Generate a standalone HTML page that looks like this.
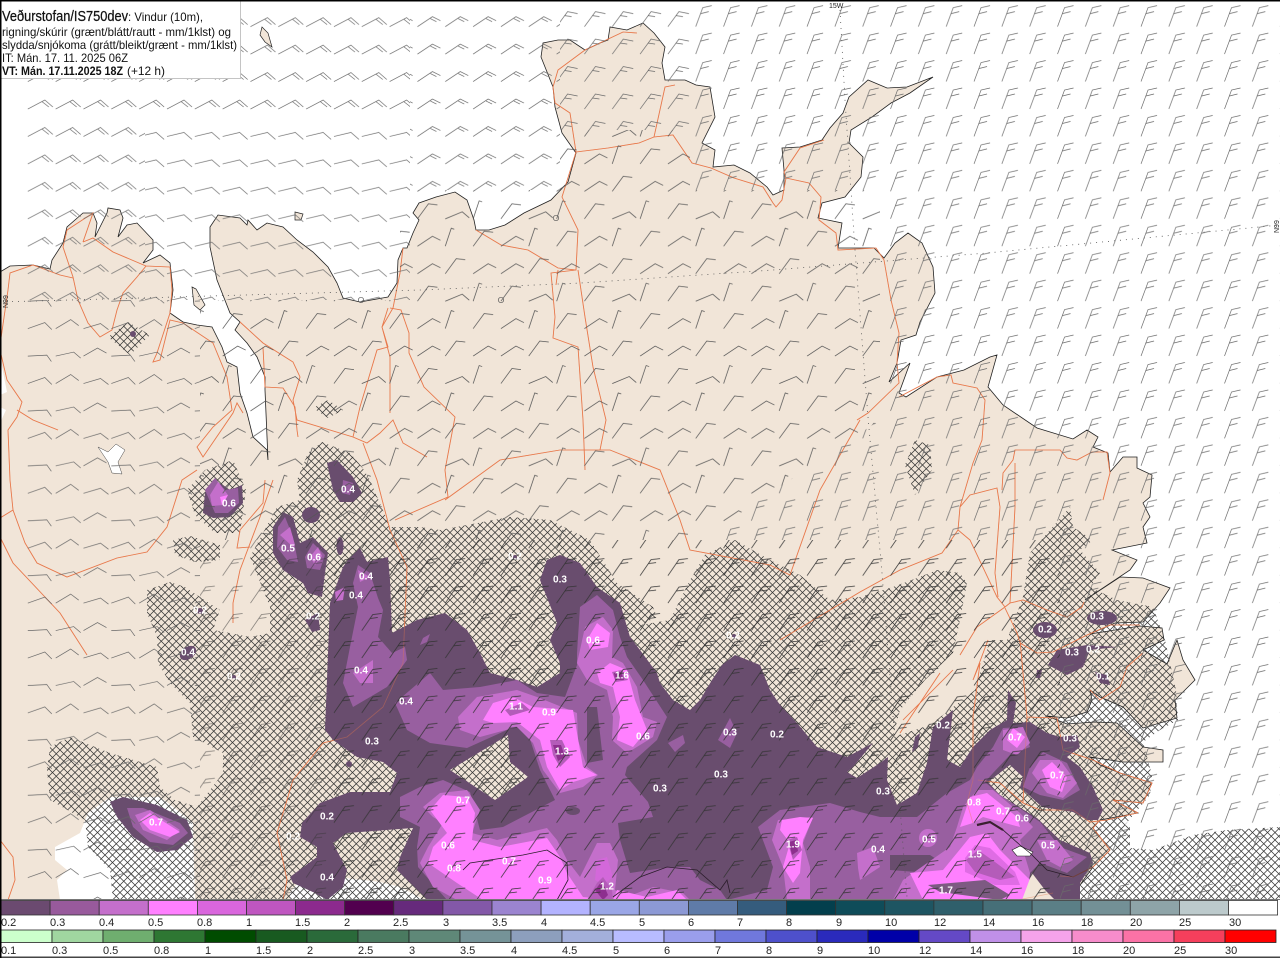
<!DOCTYPE html>
<html><head><meta charset="utf-8"><title>Veðurstofan</title>
<style>html,body{margin:0;padding:0;background:#fff}svg{display:block}</style></head>
<body>
<svg xmlns="http://www.w3.org/2000/svg" width="1280" height="958" viewBox="0 0 1280 958" font-family="'Liberation Sans',sans-serif">
<defs>
<pattern id="h" width="7.5" height="7.5" patternUnits="userSpaceOnUse"><path d="M0 0L7.5 7.5M7.5 0L0 7.5" stroke="#333" stroke-width=".75" fill="none"/></pattern>
<pattern id="pA" x="-1" y="87" width="27.83" height="27.45" patternUnits="userSpaceOnUse"><path d="M1 22L18 13L26 20M15 14.5L22 20" stroke="#6a6a6a" stroke-width=".7" fill="none"/></pattern>
<pattern id="pB" x="-1" y="87" width="27.83" height="27.45" patternUnits="userSpaceOnUse"><path d="M1 22L18 18L26 25" stroke="#6a6a6a" stroke-width=".7" fill="none"/></pattern>
<pattern id="pC0" x="-1" y="87" width="27.83" height="27.45" patternUnits="userSpaceOnUse"><path d="M1 22L16 12L24 16M14 14L20 17" stroke="#6a6a6a" stroke-width=".7" fill="none"/></pattern>
<pattern id="pC" x="-1" y="87" width="27.83" height="27.45" patternUnits="userSpaceOnUse"><path d="M1 22L12 7L22 9M9 11L16 12" stroke="#6a6a6a" stroke-width=".7" fill="none"/></pattern>
<pattern id="pD" x="-1" y="87" width="27.83" height="27.45" patternUnits="userSpaceOnUse"><path d="M1 22L8 3L17 1M6 9L14 7" stroke="#6a6a6a" stroke-width=".7" fill="none"/></pattern>
<pattern id="pE" x="-1" y="87" width="27.83" height="27.45" patternUnits="userSpaceOnUse"><path d="M1 22L12 6L21 5M9 10L17 9" stroke="#333" stroke-width=".75" fill="none"/></pattern>
<pattern id="pM" x="-1" y="87" width="83.49" height="82.35" patternUnits="userSpaceOnUse"><path d="M1 22l15 -10l8 4M28.8 22l11 -15l9 1M56.7 22l15 -10l8 4M1 49.5l11 -15l9 1M28.8 49.5l17 -7l7 6M56.7 49.5l6 -18l3 1M1 76.9l15 -10l8 4M28.8 76.9l6 -18l3 1M56.7 76.9l11 -15l9 1" stroke="#555" stroke-width=".75" fill="none"/></pattern>
<pattern id="pW" x="-1" y="87" width="83.49" height="54.9" patternUnits="userSpaceOnUse"><path d="M1 22l17 -5l8 6M28.8 22l17 -6l7 7M56.7 22l15 -9l8 6M1 49.5l14 -8l9 5M28.8 49.5l19 -1l5 7M56.7 49.5l18 -4l7 6" stroke="#666" stroke-width=".7" fill="none"/></pattern>
<g id="roads" fill="none" stroke="#e8794c" stroke-width=".85">
<path d="M0 345L8 290L10 273L33 265L60 275L73 278"/>
<path d="M83 242L93 213L67 230L63 247L73 277L78 300L88 323L100 337L112 330L117 310L123 293L137 277L146 266L113 252L93 238L83 242M146 266L170 267L172 290L170 313L157 353L153 362L160 360L170 320L183 323L213 343L227 377L232 410L213 427L197 447L203 457L233 413L237 403L243 413"/>
<path d="M0 350L7 380L22 402L17 417L8 430L10 480L13 510L0 518M13 510L25 543L37 563L67 577L117 558L147 552L167 527L182 480L197 470M17 410L33 420L58 430M0 537L13 563L60 613L87 655M0 840L13 857L15 880L8 900"/>
<path d="M240 322L263 343L293 362L300 377L293 400L297 420L353 437L360 407L377 350L388 347L382 327L393 308L400 273L403 248M263 347L265 387L283 388L295 407L297 430L298 437M353 437L367 443L380 433L393 420L403 443L427 457M363 443L377 480L390 530L407 567L403 663L383 707L347 737L323 743L293 780L277 833L287 880L283 900M388 308L382 327L390 357L390 413"/>
<path d="M233 623L233 603L240 570L260 517L273 480M265 480L263 503L240 530L237 548L250 547"/>
<path d="M476 230L501 245L528 250L558 268L576 270L578 230L562 197L576 152L570 113L555 103L553 87L558 70L585 50L623 32L637 33M576 152L608 148L639 143L654 137L665 87L675 85M654 137L673 135L692 163L711 168L734 178L763 187L773 203L776 207L782 200L786 178L784 172L800 148L824 140M786 178L809 183L821 197L819 220L836 233L838 250L876 248L884 260L891 300L899 333L897 363L899 383L868 413L857 420"/>
<path d="M576 270L551 273L555 317L553 338L578 347L583 420L585 470M578 270L585 317L593 367L606 420L600 450M558 270L556 285M390 308L401 310L409 333L409 353L424 387L455 417L445 470L448 497L395 520M445 500L500 460L560 450L610 450L660 470L680 520L690 550L770 565L790 575L820 490L860 420"/>
<path d="M899 397L937 377L951 375L953 383L977 388L985 400L982 440L973 463L960 507L958 530L970 540L997 597L1005 607M958 530L942 553L900 570L860 592L780 640M960 507L970 495L997 488L1000 507L995 573L998 597M1002 490L1003 473L1013 460L1015 450L1060 450L1067 458L1077 460L1092 452L1107 452L1110 473L1103 500M1015 463L1015 507L1010 603L1005 607L977 627L960 655M1010 603L1023 600L1047 610L1067 617L1082 607L1084 602M1005 608L1017 633L1020 643L1037 653L1053 652L1087 635L1110 625L1140 625"/>
<path d="M1020 640L1027 717L1057 718L1063 750L1093 760L1120 773L1152 783L1143 803L1113 800L1138 813M1027 717L1023 803L1040 810L1073 810L1090 822L1107 820L1137 813M1143 653L1127 667L1120 687L1100 700L1090 690M988 640L973 680L980 663L973 717L973 780L967 803L973 823M978 780L1000 783L1023 803M940 673L920 703L900 733M953 670L903 720M1100 820L1093 828L1110 850L1093 867L1073 877L1060 876M1053 893L1033 897L1017 900"/>
</g>
</defs>
<rect width="1280" height="958" fill="#fff"/>
<path fill="#f1e5d8" stroke="#222" stroke-width=".8" d="M0 272L10 266L33 265L50 269L52 260L63 243L67 227L83 213L93 213L97 223L95 237L107 213L108 208L120 210L123 218L118 237L127 225L137 223L153 240L153 250L143 263L160 255L170 263L173 290L170 313L183 322L197 325L212 327L222 347L227 362L237 367L240 393L247 413L253 437L267 450L268 460L265 390L265 377L257 357L247 343L235 330L240 322L230 313L217 280L210 247L210 227L218 215L240 218L247 225L248 220L257 230L267 223L283 227L297 240L313 252L328 267L337 283L343 298L360 302L388 297L397 283L398 260L403 248L407 248L413 233L419 220L413 213L419 203L436 197L455 192L467 200L474 220L476 230L489 230L505 225L524 213L551 200L568 182L576 153L562 133L555 107L553 87L541 57L543 43L558 40L570 40L585 50L600 43L608 40L610 27L627 30L643 23L654 33L665 47L662 63L665 80L685 80L696 85L710 87L715 117L702 143L715 150L713 167L734 165L750 173L767 187L773 195L784 190L784 170L782 148L800 147L822 140L830 128L843 113L849 97L868 80L887 88L907 87L933 77L910 93L891 103L872 117L851 130L849 143L863 157L861 177L845 197L822 203L818 218L842 223L838 248L874 248L884 258L895 243L908 233L922 243L933 267L935 293L920 322L916 335L901 340L897 363L889 382L910 363L899 393L906 397L937 377L964 370L990 357L997 355L988 387L1003 405L1037 428L1073 439L1087 430L1098 437L1093 447L1108 453L1110 472L1123 457L1137 457L1137 468L1152 475L1150 497L1143 503L1150 517L1143 527L1147 543L1112 550L1137 560L1130 570L1085 600L1120 577L1143 578L1170 588L1160 603L1143 622L1115 623L1090 634L1140 626L1162 628L1164 640L1143 650L1167 664L1177 640L1183 660L1195 680L1175 700L1177 718L1143 728L1123 707L1100 697L1090 690L1092 700L1087 712L1067 718L1047 716L1067 724L1095 722L1117 723L1143 747L1163 750L1163 762L1123 762L1090 757L1100 765L1120 773L1152 783L1143 803L1113 800L1138 813L1100 820L1093 828L1110 850L1093 867L1080 885L1060 900L0 900Z"/>
<path fill="#f1e5d8" stroke="#222" stroke-width=".7" d="M262 27L268 33L272 47L265 42L260 35ZM192 287L196 289L205 305L200 310L194 305ZM295 212L303 214L301 220L295 220Z"/>
<path fill="#fff" d="M0 357L3 372L7 392L0 395ZM0 407L6 410L0 423ZM55 847L80 833L88 813L110 797L160 797L177 810L193 823L195 900L60 900L57 880L67 870L55 860ZM290 893L300 880L345 878L380 882L400 887L425 900L290 900Z"/>
<path fill="#fff" stroke="#444" stroke-width=".5" d="M98 447L108 452L116 444L125 450L118 462L122 474L112 473L108 462Z"/>
<g fill="url(#h)">
<path d="M308 453L322 442L350 453L362 467L370 480L390 527L420 527L440 530L510 517L550 520L590 540L617 583L653 607L657 617L640 625L670 620L690 580L705 555L735 540L770 560L800 575L830 600L860 597L893 587L917 578L937 570L960 573L967 583L960 620L953 653L925 680L900 710L893 737L930 725L975 690L990 640L1007 640L1023 597L1030 553L1050 530L1070 507L1073 527L1093 540L1080 550L1100 573L1090 587L1117 600L1153 607L1165 640L1176 690L1178 720L1160 730L1143 742L1152 775L1150 795L1125 825L1130 827L1130 848L1153 850L1193 835L1227 830L1280 827L1280 900L113 900L110 870L88 847L85 820L50 800L47 770L50 747L70 737L110 753L157 767L160 787L175 800L197 807L223 773L223 753L193 737L190 703L170 683L158 663L157 637L147 613L147 590L170 582L185 587L200 597L220 610L213 630L230 633L250 637L270 633L270 607L250 557L277 507L300 500L297 480Z"/>
<path d="M173 540L190 536L220 545L220 560L195 562L175 555ZM187 490L205 470L233 460L246 490L240 533L215 533L195 515ZM108 337L128 322L150 335L130 355ZM313 408L328 400L343 410L328 418ZM905 465L915 440L930 445L932 470L915 495Z"/>
</g>
<use href="#roads"/>
<!-- precipitation 0.2 -->
<g fill="#694d6e">
<path d="M360 548L367 562L388 557L390 580L392 633L417 620L445 613L467 630L480 653L490 673L517 680L537 687L560 673L560 663L550 640L557 623L540 580L547 560L560 555L580 563L597 587L620 603L630 637L640 650L657 673L660 683L673 700L690 710L700 700L712 680L722 665L735 655L760 665L770 690L780 705L797 723L817 747L847 757L873 743L853 767L847 772L857 778L880 763L888 757L887 780L897 805L917 793L927 763L933 727L953 710L947 760L960 767L973 747L990 730L1007 720L1008 690L1016 703L1013 723L1030 722L1047 733L1060 737L1077 735L1080 747L1067 757L1080 767L1093 787L1103 810L1098 820L1087 820L1073 812L1042 807L1020 787L1023 777L1010 765L988 782L1000 795L1037 818L1060 840L1090 853L1093 863L1080 883L1080 900L428 900L397 870L400 857L413 828L347 833L333 843L347 870L343 887L327 900L315 893L293 883L290 877L317 857L317 847L300 837L302 823L320 803L350 792L390 792L397 773L383 762L357 757L333 740L325 730L330 603L343 567L348 560ZM450 770L495 800L528 777L510 762L508 735Z" fill-rule="evenodd"/>
<path d="M203 513L205 493L213 480L223 485L230 490L242 485L243 503L230 517L213 518ZM327 463L337 460L353 477L362 493L353 502L340 502L333 490ZM283 512L293 517L300 543L313 537L328 553L325 573L322 597L308 593L303 583L283 570L273 553L273 527ZM305 620L318 613L320 630L312 632ZM110 802L123 797L157 805L187 820L193 837L177 850L157 852L133 837L117 817ZM1048 665L1057 650L1087 645L1117 647L1090 650L1083 667L1067 675ZM1095 672L1107 675L1110 685L1100 683ZM1037 670L1042 670L1040 678L1036 678ZM915 737L920 733L918 747L912 752Z"/>
<ellipse cx="311" cy="515" rx="9" ry="8"/><ellipse cx="340" cy="546" rx="3.5" ry="9"/><ellipse cx="1102" cy="618" rx="15" ry="7"/><ellipse cx="1045" cy="630" rx="12" ry="8"/><ellipse cx="188" cy="653" rx="9" ry="6" transform="rotate(-35 188 653)"/><ellipse cx="349" cy="764" rx="3" ry="3"/><circle cx="200" cy="611" r="3"/><circle cx="133" cy="334" r="3"/><circle cx="515" cy="557" r="2"/><circle cx="734" cy="636" r="2"/><circle cx="234" cy="677" r="2"/>
</g>
<!-- 0.3 -->
<g fill="#985fa0">
<path d="M395 703L430 673L443 690L480 687L517 680L537 693L565 697L577 665L577 653L580 607L597 595L613 610L620 637L627 657L643 680L667 717L657 740L627 767L625 775L648 802L653 817L618 823L620 840L630 873L670 867L690 867L700 880L720 890L727 900L767 890L773 867L758 827L780 810L830 803L860 812L880 817L917 817L947 793L970 780L977 767L993 747L1003 728L1023 727L1030 747L1010 755L993 773L985 782L1000 795L1040 822L1060 847L1087 857L1067 873L1040 863L1030 873L1020 900L447 900L418 867L417 847L420 827L400 817L400 797L420 787L443 780L470 792L480 830L503 827L555 800L540 770L527 730L517 725L507 730L467 748L430 743L407 730Z"/>
<path d="M358 565L370 573L378 598L383 610L378 637L392 653L405 647L407 660L387 687L353 707L343 683L350 647L358 607L353 583ZM1023 787L1030 767L1043 752L1067 763L1080 790L1063 800L1040 795ZM668 743L683 735L685 743L675 752ZM718 740L730 718L737 733L730 748ZM423 638L430 634L427 642L420 645ZM205 490L215 478L225 490L238 488L239 503L228 513L215 513ZM343 480L353 483L350 495L342 493ZM285 517L293 537L298 562L287 560L277 547L278 527ZM305 557L313 543L325 555L320 570L307 568ZM127 808L143 808L180 823L188 833L173 845L150 842L133 827Z"/>
</g>
<g fill="#694d6e"><path d="M587 707L597 707L603 760L587 763ZM890 855L930 855L950 868L930 873L890 870Z"/><ellipse cx="573" cy="811" rx="7" ry="4"/></g>
<!-- 0.4 -->
<g fill="#c46fcb">
<path d="M458 717L477 697L517 690L537 697L577 713L578 740L587 767L598 775L583 787L560 793L543 770L533 743L517 727L480 737L460 730ZM580 650L585 627L603 617L613 630L612 657L623 663L637 687L643 717L657 722L653 737L627 753L612 740L613 717L607 690L587 680L577 663ZM423 807L440 793L467 790L480 810L472 833L497 840L547 828L557 840L567 860L580 877L597 843L610 843L618 860L615 890L627 897L653 887L683 893L690 900L457 900L433 887L420 863L428 847L443 823L433 817ZM772 840L778 820L813 817L803 843L810 867L810 900L787 900L783 867ZM957 827L963 807L977 790L993 790L1020 813L1033 827L1020 840L1030 873L1027 900L893 900L903 880L950 847ZM857 853L873 847L880 867L860 880L858 868ZM1037 840L1057 840L1073 860L1060 867L1047 860ZM1003 730L1023 727L1030 743L1017 755L1003 750ZM1040 760L1060 760L1077 783L1063 798L1047 793L1032 773ZM353 673L373 660L373 683L360 683ZM358 570L370 577L360 582ZM335 592L345 587L343 600L336 601ZM210 495L218 482L228 495L223 505L212 506ZM135 815L150 810L180 830L167 840L143 830ZM293 547L280 535L290 527L295 545ZM318 547L322 556L315 565L310 557Z"/>
<circle cx="928" cy="838" r="9"/>
</g>
<!-- 0.5 -->
<g fill="#ff80ff">
<path d="M483 720L493 703L513 697L533 707L573 710L577 733L583 767L597 775L573 782L560 790L547 767L540 740L517 722L493 723ZM587 640L597 623L610 633L608 647L590 650ZM597 673L610 663L627 670L635 700L647 730L633 747L617 740L620 717L613 687L600 683ZM430 810L443 795L467 797L475 813L472 840L500 847L547 838L560 857L567 873L583 897L613 900L617 890L647 897L677 890L687 900L483 900L457 883L428 863L433 847L447 833ZM782 820L800 817L813 818L803 840L800 873L793 883L783 867L790 843L780 830ZM960 827L970 797L987 793L1017 817L1020 827L983 817L973 823ZM957 853L970 837L987 833L1000 850L1030 880L1023 900L923 900L910 873L943 870ZM1007 740L1013 728L1025 737L1017 748ZM1042 770L1052 762L1067 777L1062 792L1050 787ZM140 820L150 813L180 832L170 837L150 830ZM220 497L228 495L222 505Z"/>
</g>
<!-- inner darker -->
<path fill="#d766dd" d="M965 858L975 845L990 848L1015 872L1020 885L995 885L965 872ZM597 860L607 857L613 877L603 885L595 880Z" opacity=".8"/>
<path fill="#b45cb9" d="M966 860L978 850L995 862L1015 877L1000 880L975 872ZM587 900L597 883L603 877L612 890L613 900ZM550 740L562 740L570 757L560 767L553 755ZM787 840L797 837L802 850L793 860ZM505 710L522 703L530 710L510 716ZM612 672L622 670L628 680L616 682Z"/>
<path fill="#8d2f8e" d="M789 842L796 840L798 851L792 855ZM614 673L621 672L624 680L615 680ZM553 745L561 745L565 757L558 761ZM595 890L602 881L608 895L603 900Z"/>
<path fill="#7d5a82" d="M928 885L985 880L1010 895L1000 900L940 892Z"/>
<path fill="#f1e5d8" d="M1032 873L1045 890L1055 900L1022 900Z"/>
<path fill="#fff" stroke="#222" stroke-width=".6" d="M1012 850L1020 846L1033 852L1030 856L1017 856Z"/>
<g fill="none" stroke="#2a1c2a" stroke-width=".8">
<path d="M977 825L990 822L1003 830L1020 845L1030 853L1047 870L1073 877L1093 867"/>
<path d="M463 870L470 863L523 855L547 850L567 863L568 880L557 900M613 897L640 877L667 867L697 870L720 890L727 880L730 893"/>
</g>
<path d="M977 825L990 822L1003 830" fill="none" stroke="#3a2030" stroke-width="2.2"/>
<use href="#roads" opacity=".4"/>
<g fill="none" stroke="#555" stroke-width=".8" stroke-dasharray="1 5">
<path d="M0 302L420 290L581 283L773 270L987 253L1280 225"/>
<path d="M840 10L845 100L855 250L868 417L882 573L900 807L907 897"/>
</g>
<g fill="none" stroke="#555" stroke-width=".7"><circle cx="361" cy="300" r="2.7"/><circle cx="501" cy="300" r="2.7"/><circle cx="556" cy="218" r="2.7"/></g>
<!-- wind barbs -->
<rect x="27" y="0" width="118" height="300" fill="url(#pA)"/>
<rect x="145" y="0" width="265" height="115" fill="url(#pA)"/>
<rect x="145" y="115" width="265" height="185" fill="url(#pB)"/>
<rect x="410" y="0" width="150" height="190" fill="url(#pC0)"/>
<rect x="560" y="0" width="130" height="130" fill="url(#pC)"/>
<polygon points="690,0 1280,0 1280,900 1060,900 1060,540 700,540 880,420 880,190 690,190" fill="url(#pD)"/>
<polygon points="400,190 560,190 560,130 690,130 690,190 880,190 880,420 700,540 400,540" fill="url(#pM)"/>
<polygon points="330,540 1060,540 1060,900 330,900" fill="url(#pE)"/>
<rect x="27" y="300" width="173" height="600" fill="url(#pW)"/>
<rect x="200" y="300" width="200" height="240" fill="url(#pM)"/>
<rect x="200" y="540" width="130" height="360" fill="url(#pE)" opacity=".6"/>
<!-- labels -->
<g fill="#fff" font-size="10" font-weight="bold" text-anchor="middle" dominant-baseline="central">
<text x="229" y="504">0.6</text><text x="348" y="490">0.4</text><text x="288" y="549">0.5</text><text x="314" y="558">0.6</text><text x="366" y="577">0.4</text><text x="356" y="596">0.4</text><text x="313" y="617">0.2</text><text x="188" y="653">0.4</text><text x="361" y="671">0.4</text><text x="406" y="702">0.4</text><text x="372" y="742">0.3</text><text x="560" y="580">0.3</text><text x="593" y="641">0.6</text><text x="622" y="676">1.6</text><text x="516" y="707">1.1</text><text x="549" y="713">0.9</text><text x="562" y="752">1.3</text><text x="643" y="737">0.6</text><text x="730" y="733">0.3</text><text x="777" y="735">0.2</text><text x="943" y="726">0.2</text><text x="721" y="775">0.3</text><text x="660" y="789">0.3</text><text x="883" y="792">0.3</text><text x="1015" y="738">0.7</text><text x="1070" y="739">0.3</text><text x="1057" y="776">0.7</text><text x="974" y="803">0.8</text><text x="1003" y="812">0.7</text><text x="1022" y="819">0.6</text><text x="1048" y="846">0.5</text><text x="929" y="840">0.5</text><text x="878" y="850">0.4</text><text x="975" y="855">1.5</text><text x="946" y="891">1.7</text><text x="793" y="845">1.9</text><text x="463" y="801">0.7</text><text x="448" y="846">0.6</text><text x="454" y="869">0.8</text><text x="509" y="862">0.7</text><text x="545" y="881">0.9</text><text x="607" y="887">1.2</text><text x="156" y="823">0.7</text><text x="327" y="817">0.2</text><text x="293" y="837">0.2</text><text x="327" y="878">0.4</text><text x="1045" y="630">0.2</text><text x="1097" y="617">0.3</text><text x="1072" y="653">0.3</text><text x="1093" y="650">0.2</text><text x="1103" y="677">0.1</text><text x="733" y="636">0.2</text><text x="515" y="557">0.2</text><text x="200" y="611">0.2</text><text x="234" y="677">0.2</text>
</g>
<g fill="#222" font-size="7"><text x="829" y="8">15W</text><text transform="translate(8 308) rotate(-90)">N99</text><text transform="translate(1279 233) rotate(-90)">N99</text></g>
<!-- header -->
<rect x="0.5" y="0.5" width="240" height="78" fill="#fff" stroke="#c4c4c4"/>
<g fill="#111" font-size="12">
<text x="2" y="21" font-size="14.5" textLength="126" lengthAdjust="spacingAndGlyphs" stroke="#111" stroke-width=".25">Veðurstofan/IS750dev</text><text x="128" y="21" textLength="75" lengthAdjust="spacingAndGlyphs">: Vindur (10m),</text>
<text x="2" y="36" textLength="229" lengthAdjust="spacingAndGlyphs">rigning/skúrir (grænt/blátt/rautt - mm/1klst) og</text>
<text x="2" y="49" textLength="235" lengthAdjust="spacingAndGlyphs">slydda/snjókoma (grátt/bleikt/grænt - mm/1klst)</text>
<text x="2" y="62" textLength="126" lengthAdjust="spacingAndGlyphs">IT: Mán. 17. 11. 2025 06Z</text>
<text x="2" y="75" font-weight="bold" textLength="121" lengthAdjust="spacingAndGlyphs">VT: Mán. 17.11.2025 18Z</text><text x="127" y="75" textLength="38" lengthAdjust="spacingAndGlyphs">(+12 h)</text>
</g>
<!-- frame -->
<path d="M.75 0V958M0 .75H1280" stroke="#000" stroke-width="1.5" fill="none"/>
<rect x="0" y="899" width="1280" height="59" fill="#fff"/>
<rect x="0" y="899" width="1280" height="1" fill="#777"/>
<!-- legend row 1 -->
<g stroke="#333" stroke-width=".8">
<rect x="1" y="900.5" width="49.1" height="14.5" fill="#6b4a70"/><rect x="50.1" y="900.5" width="49.1" height="14.5" fill="#985a9c"/><rect x="99.2" y="900.5" width="49.1" height="14.5" fill="#c46fcb"/><rect x="148.3" y="900.5" width="49.1" height="14.5" fill="#ff80ff"/><rect x="197.4" y="900.5" width="49.1" height="14.5" fill="#d966dd"/><rect x="246.5" y="900.5" width="49.1" height="14.5" fill="#bf56c0"/><rect x="295.6" y="900.5" width="49.1" height="14.5" fill="#8c2a8e"/><rect x="344.7" y="900.5" width="49.1" height="14.5" fill="#52004f"/><rect x="393.8" y="900.5" width="49.1" height="14.5" fill="#662a7c"/><rect x="442.9" y="900.5" width="49.1" height="14.5" fill="#8358a8"/><rect x="492" y="900.5" width="49.1" height="14.5" fill="#9b84d0"/><rect x="541.1" y="900.5" width="49.1" height="14.5" fill="#b3b3ff"/><rect x="590.2" y="900.5" width="49.1" height="14.5" fill="#9aa6e6"/><rect x="639.3" y="900.5" width="49.1" height="14.5" fill="#8c99d5"/><rect x="688.4" y="900.5" width="49.1" height="14.5" fill="#5f7ba8"/><rect x="737.5" y="900.5" width="49.1" height="14.5" fill="#355c7d"/><rect x="786.6" y="900.5" width="49.1" height="14.5" fill="#033f4d"/><rect x="835.7" y="900.5" width="49.1" height="14.5" fill="#0f4c59"/><rect x="884.8" y="900.5" width="49.1" height="14.5" fill="#1e5562"/><rect x="933.9" y="900.5" width="49.1" height="14.5" fill="#2f5f6b"/><rect x="983" y="900.5" width="49.1" height="14.5" fill="#466f78"/><rect x="1032.1" y="900.5" width="49.1" height="14.5" fill="#5b7f86"/><rect x="1081.2" y="900.5" width="49.1" height="14.5" fill="#739096"/><rect x="1130.3" y="900.5" width="49.1" height="14.5" fill="#8ea4a8"/><rect x="1179.4" y="900.5" width="49.1" height="14.5" fill="#bccacc"/><rect x="1228.5" y="900.5" width="49.1" height="14.5" fill="#fff"/>
</g>
<g stroke="#222" stroke-width=".8">
<rect x="1" y="930" width="51" height="12.5" fill="#ccffcc"/><rect x="52" y="930" width="51" height="12.5" fill="#a0d6a0"/><rect x="103" y="930" width="51" height="12.5" fill="#6fae6f"/><rect x="154" y="930" width="51" height="12.5" fill="#2e7733"/><rect x="205" y="930" width="51" height="12.5" fill="#004c00"/><rect x="256" y="930" width="51" height="12.5" fill="#185a20"/><rect x="307" y="930" width="51" height="12.5" fill="#2a6a3a"/><rect x="358" y="930" width="51" height="12.5" fill="#4a7a60"/><rect x="409" y="930" width="51" height="12.5" fill="#5f8878"/><rect x="460" y="930" width="51" height="12.5" fill="#759398"/><rect x="511" y="930" width="51" height="12.5" fill="#8d9fbd"/><rect x="562" y="930" width="51" height="12.5" fill="#a3afdb"/><rect x="613" y="930" width="51" height="12.5" fill="#b8bcff"/><rect x="664" y="930" width="51" height="12.5" fill="#9a9eec"/><rect x="715" y="930" width="51" height="12.5" fill="#7078dc"/><rect x="766" y="930" width="51" height="12.5" fill="#4e50cb"/><rect x="817" y="930" width="51" height="12.5" fill="#2a2abc"/><rect x="868" y="930" width="51" height="12.5" fill="#0000a8"/><rect x="919" y="930" width="51" height="12.5" fill="#6449c6"/><rect x="970" y="930" width="51" height="12.5" fill="#c090e8"/><rect x="1021" y="930" width="51" height="12.5" fill="#f5a3ea"/><rect x="1072" y="930" width="51" height="12.5" fill="#f78ccb"/><rect x="1123" y="930" width="51" height="12.5" fill="#fb72a6"/><rect x="1174" y="930" width="51" height="12.5" fill="#f63f5c"/><rect x="1225" y="930" width="51" height="12.5" fill="#ff0000"/>
</g>
<g fill="#222" font-size="11">
<text x="1" y="926">0.2</text><text x="50" y="926">0.3</text><text x="99" y="926">0.4</text><text x="148" y="926">0.5</text><text x="197" y="926">0.8</text><text x="246" y="926">1</text><text x="295" y="926">1.5</text><text x="344" y="926">2</text><text x="393" y="926">2.5</text><text x="443" y="926">3</text><text x="492" y="926">3.5</text><text x="541" y="926">4</text><text x="590" y="926">4.5</text><text x="639" y="926">5</text><text x="688" y="926">6</text><text x="737" y="926">7</text><text x="786" y="926">8</text><text x="836" y="926">9</text><text x="885" y="926">10</text><text x="934" y="926">12</text><text x="983" y="926">14</text><text x="1032" y="926">16</text><text x="1081" y="926">18</text><text x="1130" y="926">20</text><text x="1179" y="926">25</text><text x="1229" y="926">30</text>
<text x="1" y="954">0.1</text><text x="52" y="954">0.3</text><text x="103" y="954">0.5</text><text x="154" y="954">0.8</text><text x="205" y="954">1</text><text x="256" y="954">1.5</text><text x="307" y="954">2</text><text x="358" y="954">2.5</text><text x="409" y="954">3</text><text x="460" y="954">3.5</text><text x="511" y="954">4</text><text x="562" y="954">4.5</text><text x="613" y="954">5</text><text x="664" y="954">6</text><text x="715" y="954">7</text><text x="766" y="954">8</text><text x="817" y="954">9</text><text x="868" y="954">10</text><text x="919" y="954">12</text><text x="970" y="954">14</text><text x="1021" y="954">16</text><text x="1072" y="954">18</text><text x="1123" y="954">20</text><text x="1174" y="954">25</text><text x="1225" y="954">30</text>
</g>
<rect x="0" y="956.5" width="1280" height="1.5" fill="#444"/>
<path d="M.75 899V958" stroke="#000" stroke-width="1.5"/>
</svg>
</body></html>
